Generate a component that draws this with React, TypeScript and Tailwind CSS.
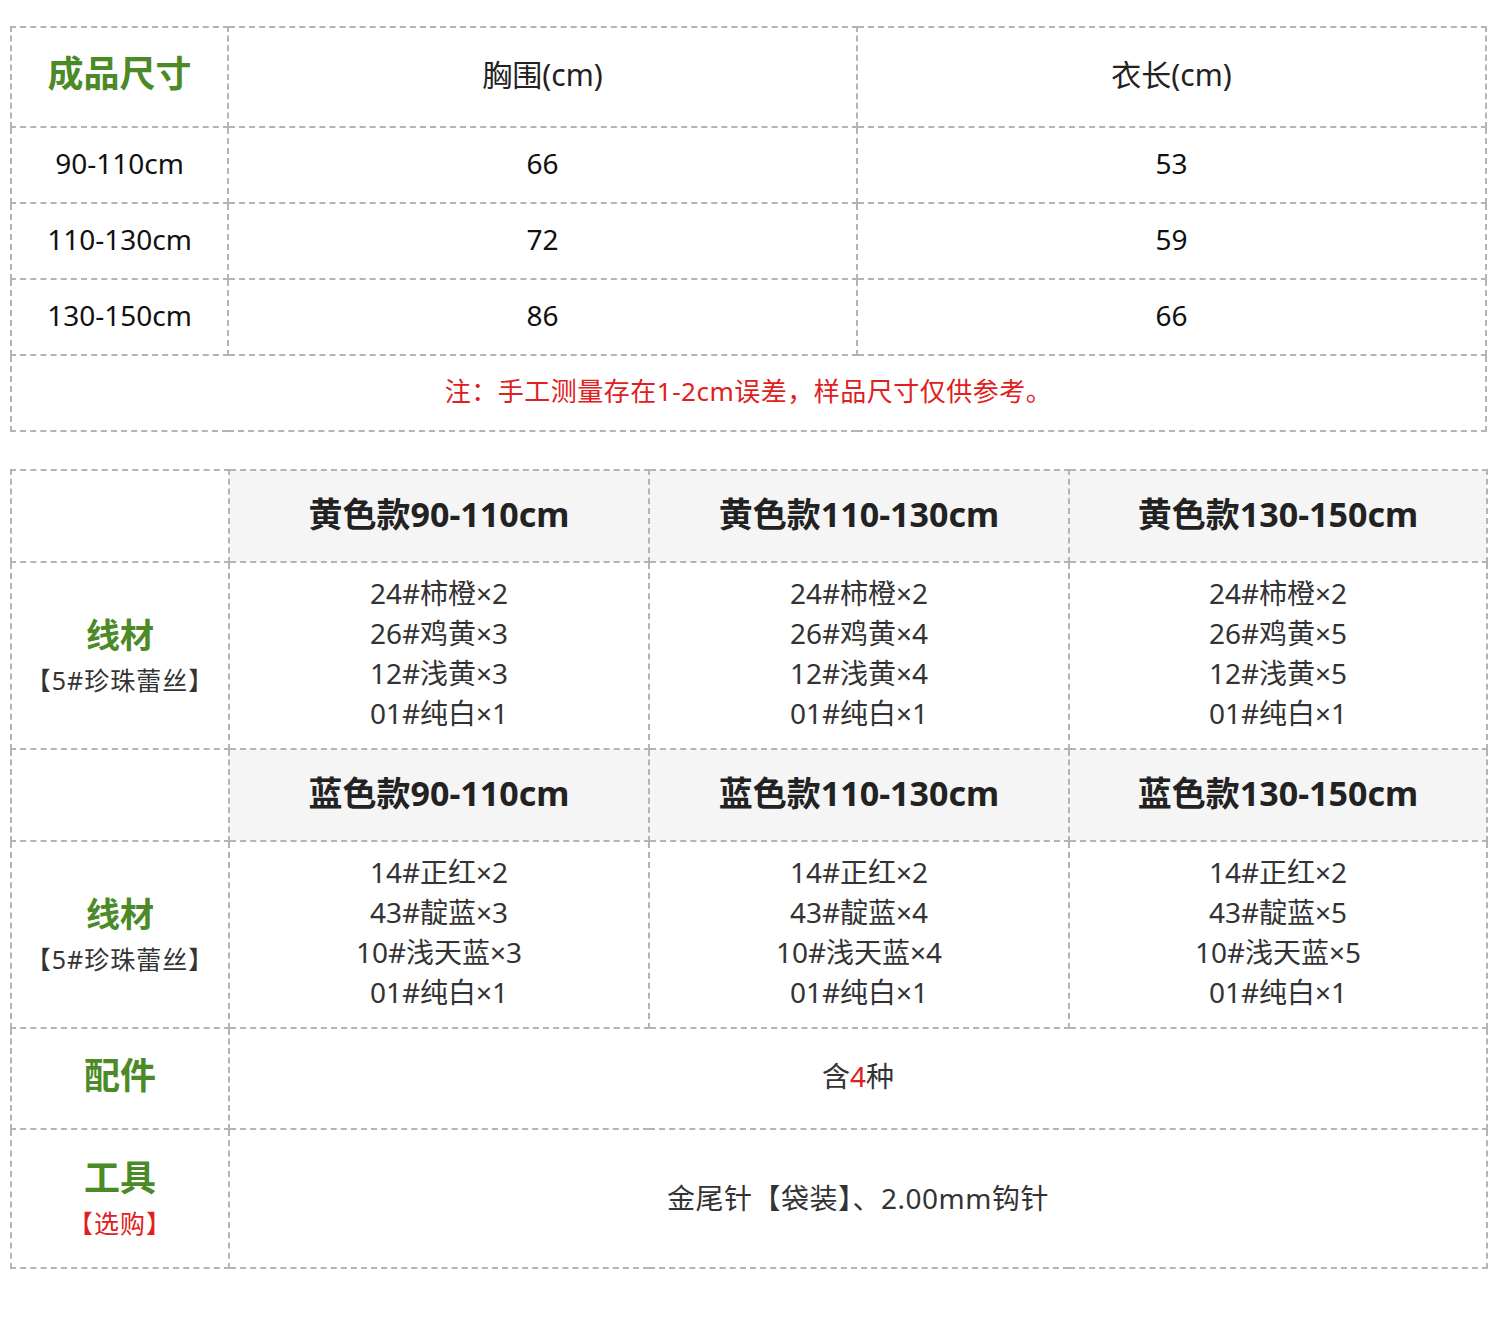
import React from 'react'

const cell = 'border-2 border-dashed border-[#b4b4b4] text-center align-middle'

const sizeRows = [
  { size: '90-110cm', chest: '66', length: '53' },
  { size: '110-130cm', chest: '72', length: '59' },
  { size: '130-150cm', chest: '86', length: '66' },
]

const yellow = [
  { title: '黄色款90-110cm', items: ['24#柿橙×2', '26#鸡黄×3', '12#浅黄×3', '01#纯白×1'] },
  { title: '黄色款110-130cm', items: ['24#柿橙×2', '26#鸡黄×4', '12#浅黄×4', '01#纯白×1'] },
  { title: '黄色款130-150cm', items: ['24#柿橙×2', '26#鸡黄×5', '12#浅黄×5', '01#纯白×1'] },
]

const blue = [
  { title: '蓝色款90-110cm', items: ['14#正红×2', '43#靛蓝×3', '10#浅天蓝×3', '01#纯白×1'] },
  { title: '蓝色款110-130cm', items: ['14#正红×2', '43#靛蓝×4', '10#浅天蓝×4', '01#纯白×1'] },
  { title: '蓝色款130-150cm', items: ['14#正红×2', '43#靛蓝×5', '10#浅天蓝×5', '01#纯白×1'] },
]

function Yarn() {
  return (
    <td className={cell}>
      <div className="pb-[2px] text-[34px] font-bold leading-[46px] text-[#4b8a26]">线材</div>
      <div className="text-[25px] leading-[40px] tracking-[1px] text-[#333]">【5#珍珠蕾丝】</div>
    </td>
  )
}

function Group({ data }: { data: typeof yellow }) {
  return (
    <>
      <tr className="h-[92px]">
        <td className={cell}></td>
        {data.map((d) => (
          <td key={d.title} className={`${cell} bg-[#f5f5f5] pb-[4px] text-[34px] font-bold text-[#222]`}>
            {d.title}
          </td>
        ))}
      </tr>
      <tr className="h-[187px]">
        <Yarn />
        {data.map((d) => (
          <td key={d.title} className={`${cell} pb-[6px] text-[28px] leading-[40px] text-[#333]`}>
            {d.items.map((it) => (
              <div key={it}>{it}</div>
            ))}
          </td>
        ))}
      </tr>
    </>
  )
}

export default function App() {
  return (
    <div
      className="w-[1500px] h-[1322px] bg-white pl-[10px] pr-[13px] pt-[26px]"
      style={{ fontFamily: '"Noto Sans", "Noto Sans CJK SC", sans-serif' }}
    >
      <table className="w-[1477px] border-collapse table-fixed">
        <colgroup>
          <col className="w-[217px]" />
          <col className="w-[629px]" />
          <col />
        </colgroup>
        <tbody>
          <tr className="h-[100px]">
            <td className={`${cell} pb-[6px] text-[36px] font-bold text-[#4b8a26]`}>成品尺寸</td>
            <td className={`${cell} pb-[6px] text-[30px] text-[#222]`}>胸围(cm)</td>
            <td className={`${cell} pb-[6px] text-[30px] text-[#222]`}>衣长(cm)</td>
          </tr>
          {sizeRows.map((r) => (
            <tr key={r.size} className="h-[76px]">
              <td className={`${cell} pb-[5px] text-[28px] text-[#111]`}>{r.size}</td>
              <td className={`${cell} pb-[5px] text-[28px] text-[#111]`}>{r.chest}</td>
              <td className={`${cell} pb-[5px] text-[28px] text-[#111]`}>{r.length}</td>
            </tr>
          ))}
          <tr className="h-[76px]">
            <td colSpan={3} className={`${cell} pb-[4px] text-[26px] tracking-[0.5px] text-[#e02020]`}>
              注：手工测量存在1-2cm误差，样品尺寸仅供参考。
            </td>
          </tr>
        </tbody>
      </table>

      <table className="mt-[37px] w-[1478px] border-collapse table-fixed">
        <colgroup>
          <col className="w-[218px]" />
          <col className="w-[420px]" />
          <col className="w-[420px]" />
          <col />
        </colgroup>
        <tbody>
          <Group data={yellow} />
          <Group data={blue} />
          <tr className="h-[101px]">
            <td className={`${cell} pb-[6px] text-[36px] font-bold text-[#4b8a26]`}>配件</td>
            <td colSpan={3} className={`${cell} pb-[6px] text-[28px] text-[#333]`}>
              含<span className="text-[#e02020]">4</span>种
            </td>
          </tr>
          <tr className="h-[139px]">
            <td className={cell}>
              <div className="pb-[2px] text-[36px] font-bold leading-[46px] text-[#4b8a26]">工具</div>
              <div className="text-[25px] leading-[40px] tracking-[1px] text-[#e02020]">【选购】</div>
            </td>
            <td colSpan={3} className={`${cell} pb-[2px] text-[28px] tracking-[0.5px] text-[#333]`}>
              金尾针【袋装】、2.00mm钩针
            </td>
          </tr>
        </tbody>
      </table>
    </div>
  )
}
